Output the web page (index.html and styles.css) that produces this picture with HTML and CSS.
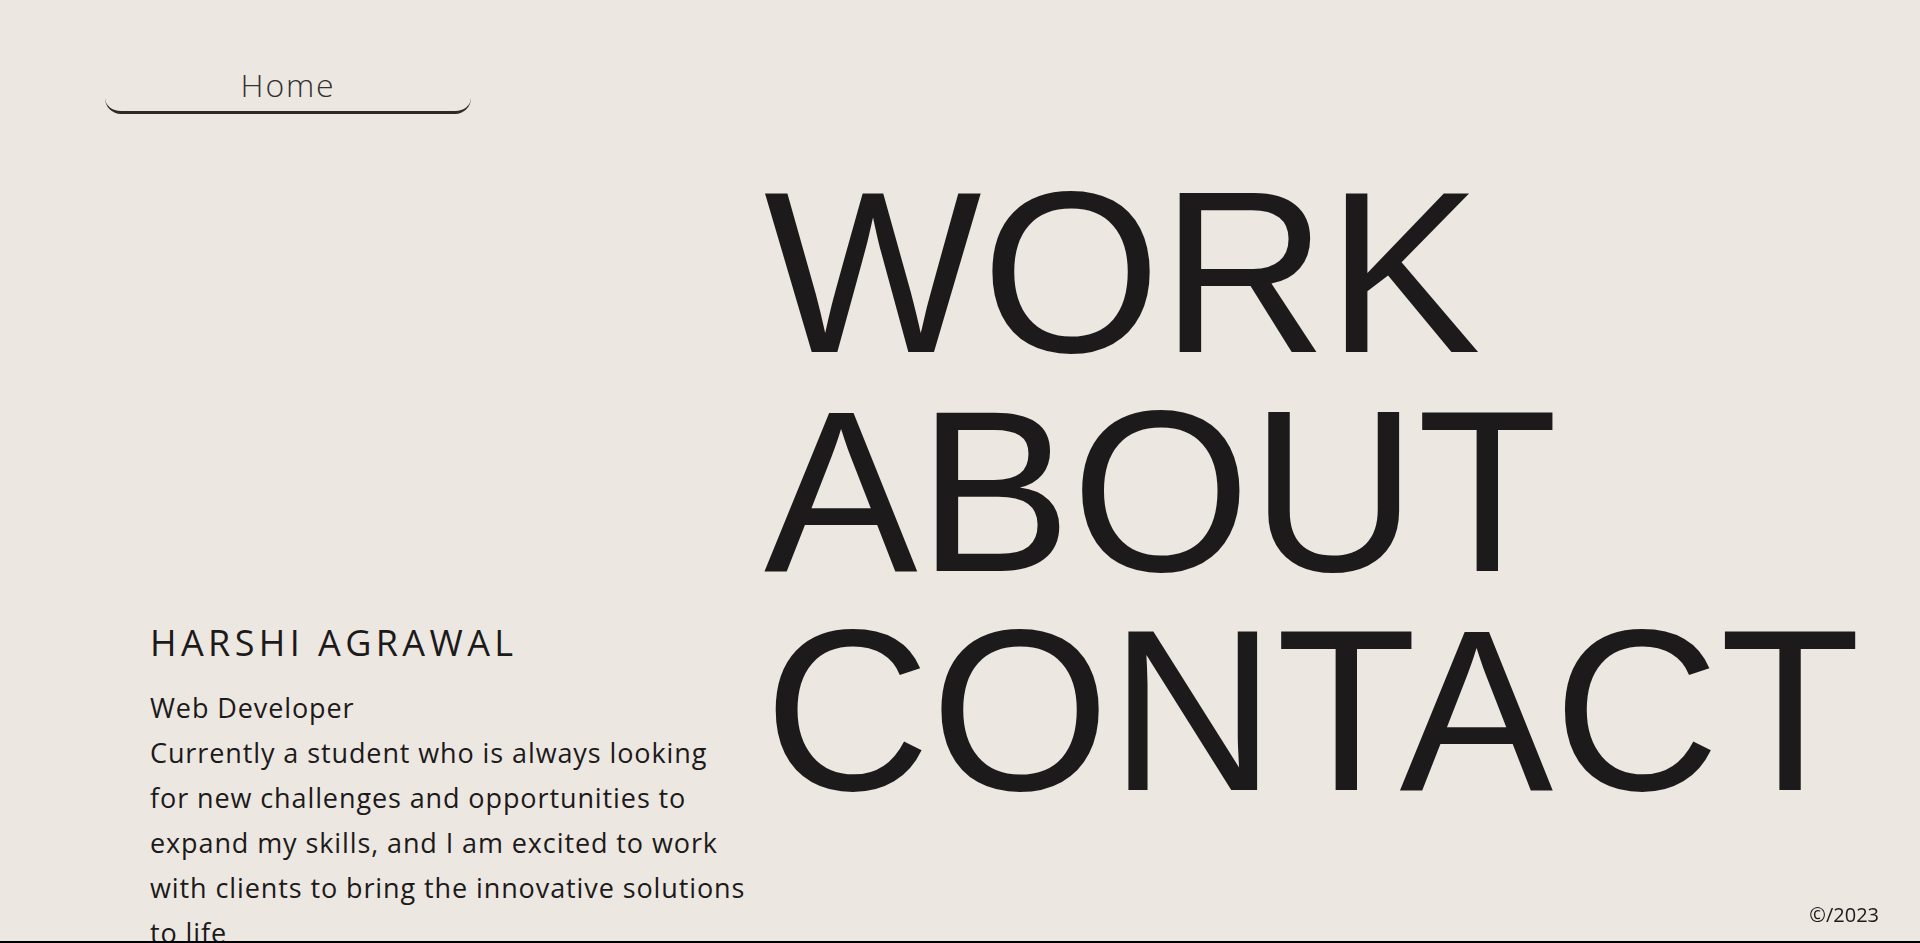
FILE: index.html
```html
<!DOCTYPE html>
<html lang="en">
<head>
<meta charset="utf-8">
<title>Harshi Agrawal</title>
<link rel="stylesheet" href="styles.css">
</head>
<body>
<div class="page">
  <aside class="side">
    <nav class="nav">
      <a class="home" href="#">Home</a>
    </nav>
    <section class="intro">
      <h1 class="name">HARSHI AGRAWAL</h1>
      <p class="bio">Web Developer<br>Currently a student who is always looking for new challenges and opportunities to expand my skills, and I am excited to work with clients to bring the innovative solutions to life</p>
    </section>
  </aside>
  <main class="menu">
    <a class="menu-link" href="#">WORK</a>
    <a class="menu-link" href="#">ABOUT</a>
    <a class="menu-link" href="#">CONTACT</a>
  </main>
</div>
<footer class="copy">©/2023</footer>
<div class="edge"></div>
</body>
</html>
```
FILE: styles.css
```css
html, body {
  margin: 0;
  padding: 0;
}
body {
  background: #ece7e1;
  color: #1c1a1a;
  font-family: "Open Sans", "DejaVu Sans", sans-serif;
}
.page {
  display: flex;
  align-items: flex-start;
}
.side {
  width: 659px;
  padding: 66px 0 8px 105px;
  flex: none;
}
.nav {
  display: flex;
}
.home {
  display: block;
  width: 366px;
  font-size: 32px;
  font-weight: 300;
  letter-spacing: 1.8px;
  line-height: 1.2;
  text-align: center;
  color: #333131;
  text-decoration: none;
  padding-bottom: 7px;
  border-bottom: 3px solid #2d2a28;
  border-radius: 0 0 16px 16px;
}
.intro {
  margin: 507px 0 0 45px;
  width: 601px;
}
.name {
  margin: 0;
  font-size: 36px;
  font-weight: 400;
  line-height: 1.2;
  letter-spacing: 4.4px;
}
.bio {
  margin: 20px 0 0;
  font-size: 27px;
  font-weight: 400;
  line-height: 45px;
  letter-spacing: 0.9px;
}
.menu {
  display: flex;
  flex-direction: column;
  align-items: flex-start;
  padding-top: 163px;
}
.menu-link {
  font-family: "Liberation Sans", Arial, sans-serif;
  font-size: 230.4px;
  line-height: 0.95;
  color: #1c1a1a;
  text-decoration: none;
}
.copy {
  position: fixed;
  right: 41px;
  bottom: 15px;
  font-size: 20px;
  color: #1c1a1a;
}
.edge {
  position: fixed;
  left: 0;
  right: 0;
  bottom: 0;
  height: 2px;
  background: #000;
}
```
